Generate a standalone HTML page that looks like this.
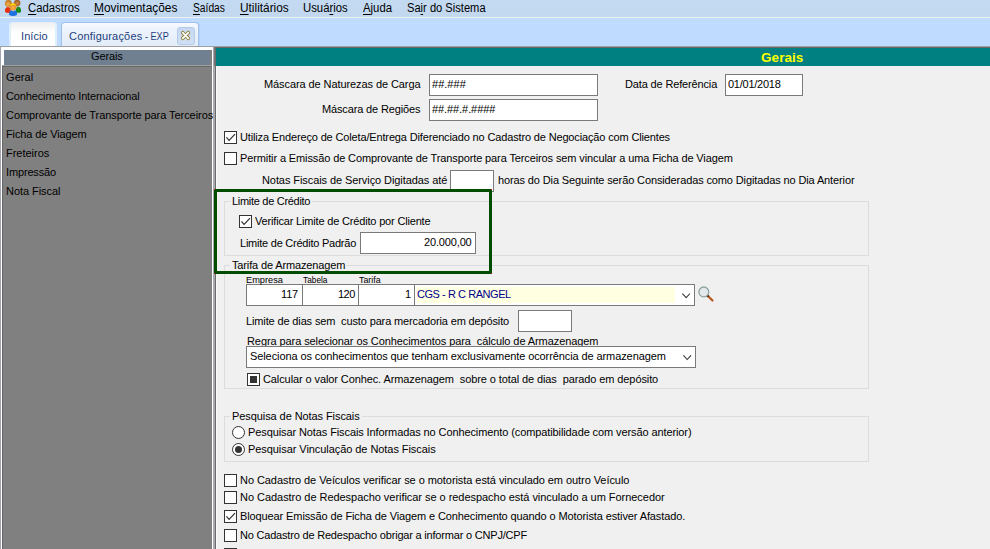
<!DOCTYPE html>
<html lang="pt-BR">
<head>
<meta charset="utf-8">
<title>Configurações - EXP</title>
<style>
html,body{margin:0;padding:0;}
body{width:990px;height:549px;overflow:hidden;position:relative;background:#f0f0f0;font-family:"Liberation Sans",Arial,sans-serif;font-size:11px;color:#000;}
.abs{position:absolute;}
.t{position:absolute;white-space:nowrap;line-height:13px;height:13px;font-size:11px;}
.mi{font-size:12px;line-height:15px;height:15px;}
.mi u{text-decoration:underline;text-underline-offset:1.5px;}
.tb{font-size:11px;color:#1e3f7d;}
.hd{font-weight:bold;font-size:13.5px;color:#ffff00;line-height:15px;height:15px;}
.sm{font-size:9.5px;line-height:11px;height:11px;}
.gl{background:#f0f0f0;box-shadow:-2px 0 0 #f0f0f0,2px 0 0 #f0f0f0;}
.tab{position:absolute;box-sizing:border-box;border:1px solid #dbeaff;border-bottom:none;border-radius:4px 4px 0 0;}
.inp{position:absolute;box-sizing:border-box;border:1px solid #7a7a7a;background:#fff;}
.cb{position:absolute;box-sizing:border-box;width:13px;height:13px;border:1px solid #333;background:#fff;}
.rd{position:absolute;box-sizing:border-box;width:13px;height:13px;border:1px solid #333;border-radius:50%;background:#fff;}
.gb{position:absolute;box-sizing:border-box;border:1px solid #dcdcdc;}
</style>
</head>
<body>
<!-- menu bar -->
<div class="abs" style="left:0;top:0;width:990px;height:17px;background:linear-gradient(#c4daf2,#c1d8ef);"></div>
<div class="abs" style="left:0;top:17px;width:990px;height:1px;background:#eef0f2;"></div>
<div class="abs" style="left:0;top:18px;width:990px;height:28px;background:#bfdbff;"></div>
<svg class="abs" style="left:0;top:0" width="24" height="17" viewBox="0 0 24 17">
 <defs>
  <radialGradient id="h1" cx="0.45" cy="0.6" r="0.6"><stop offset="0" stop-color="#f8b552"/><stop offset="1" stop-color="#b66f1a"/></radialGradient>
  <radialGradient id="h2" cx="0.5" cy="0.55" r="0.6"><stop offset="0" stop-color="#d08a48"/><stop offset="1" stop-color="#8f5520"/></radialGradient>
  <radialGradient id="h3" cx="0.5" cy="0.6" r="0.6"><stop offset="0" stop-color="#ffb44e"/><stop offset="1" stop-color="#d98220"/></radialGradient>
 </defs>
 <circle cx="8.4" cy="3.4" r="3.4" fill="url(#h1)"/>
 <circle cx="17.1" cy="3.1" r="3.3" fill="url(#h2)"/>
 <path d="M5 12 Q4.6 7.2 7.6 6.9 Q10.6 7 10.6 10 L10.4 12.6 Q7.5 13.4 5 12Z" fill="#e8300f"/>
 <path d="M16 12.6 L15.9 9 Q16.5 6.8 18.6 6.8 Q21.3 7.2 21 12 Q18.6 13.3 16 12.6Z" fill="#158a15"/>
 <circle cx="13.1" cy="7" r="3.4" fill="url(#h3)"/>
 <path d="M9.9 6 Q10.4 3.2 13.2 3.2 Q15.8 3.3 16.2 5.6 Q13.4 4.4 9.9 6Z" fill="#ffd800"/>
 <path d="M9.1 15 Q8.9 10.6 11.2 10.2 L13.1 11.4 L15 10.2 Q17.2 10.6 17 15 Q13 16.8 9.1 15Z" fill="#1e6fe0"/>
</svg>

<!-- tabs -->
<div class="tab" style="left:9px;top:22px;width:48px;height:24px;background:linear-gradient(#efefef,#fbfbfb 30%,#ffffff 50%);border-color:#e4edf9;box-shadow:inset 1px 0 0 #d8f3fd,inset -1px 0 0 #d8f3fd;"></div>
<div class="tab" style="left:61px;top:22px;width:138px;height:24px;background:linear-gradient(#f7faff,#eef4fc 25%,#e3ecf9);border-color:#9fc0ec;box-shadow:1px 0 1px #b4d0f8;">
 <div class="abs" style="left:115px;top:4px;width:18px;height:18px;box-sizing:border-box;border:1px solid #b4cbec;border-radius:3px;background:linear-gradient(#c6d8f0,#d0dff3)"></div>
 <svg class="abs" style="left:115px;top:4px" width="18" height="18" viewBox="0 0 18 18"><path d="M5.7 5.7 L11.3 11.3 M11.3 5.7 L5.7 11.3" stroke="#8a7a32" stroke-width="3.5" stroke-linecap="round" fill="none"/><path d="M5.7 5.7 L11.3 11.3 M11.3 5.7 L5.7 11.3" stroke="#ffffff" stroke-width="1.9" stroke-linecap="round" fill="none"/></svg>
</div>

<!-- left panel -->
<div class="abs" style="left:0;top:46px;width:990px;height:1px;background:#a0a0a0;"></div>
<div class="abs" style="left:0;top:47px;width:212px;height:502px;background:#808080;"></div>
<div class="abs" style="left:0;top:47px;width:1px;height:502px;background:#a4a4ac;"></div>
<div class="abs" style="left:1px;top:47px;width:1px;height:502px;background:#fff;"></div>
<div class="abs" style="left:1px;top:47px;width:211px;height:3px;background:#fff;"></div>
<div class="abs" style="left:1px;top:47px;width:3px;height:18px;background:#fff;"></div>
<div class="abs" style="left:4px;top:50px;width:206px;height:15px;background:#708090;"></div>
<div class="abs" style="left:2px;top:65px;width:210px;height:1px;background:#a0a0a0;"></div>
<div class="abs" style="left:2px;top:66px;width:210px;height:1px;background:#686868;"></div>
<div class="abs" style="left:2px;top:66px;width:1px;height:483px;background:#686868;"></div>
<div class="abs" style="left:212px;top:47px;width:1px;height:502px;background:#fff;"></div>
<div class="abs" style="left:213px;top:47px;width:2px;height:502px;background:#a9a9b1;"></div>
<div class="abs" style="left:215px;top:47px;width:1px;height:502px;background:#6b6b6b;"></div>
<div class="abs" style="left:214px;top:47px;width:1px;height:19px;background:#77777b;"></div>
<div class="abs" style="left:216px;top:66px;width:1px;height:483px;background:#fbfbfb;"></div>

<!-- right panel -->
<div class="abs" style="left:216px;top:47px;width:774px;height:1px;background:#6a6a6a;"></div>
<div class="abs" style="left:216px;top:48px;width:774px;height:18px;background:#008080;"></div>

<div class="inp" style="left:429px;top:74px;width:169px;height:22px"></div>
<div class="inp" style="left:429px;top:99px;width:169px;height:22px"></div>
<div class="inp" style="left:725px;top:74px;width:78px;height:22px"></div>

<div class="cb" style="left:224px;top:131px"></div>
<svg class="abs" style="left:224px;top:131px" width="13" height="13"><path d="M2.4 6.4 L5.1 9.4 L11 3.1" fill="none" stroke="#333" stroke-width="1.2"/></svg>
<div class="cb" style="left:224px;top:152px"></div>
<div class="inp" style="left:450px;top:170px;width:44px;height:22px"></div>

<!-- Limite de Crédito -->
<div class="gb" style="left:224px;top:201px;width:645px;height:55px"></div>
<div class="cb" style="left:239px;top:215px"></div>
<svg class="abs" style="left:239px;top:215px" width="13" height="13"><path d="M2.4 6.4 L5.1 9.4 L11 3.1" fill="none" stroke="#333" stroke-width="1.2"/></svg>
<div class="inp" style="left:360px;top:232px;width:116px;height:22px"></div>

<!-- Tarifa de Armazenagem -->
<div class="gb" style="left:224px;top:265px;width:645px;height:124px"></div>
<div class="inp" style="left:246px;top:284px;width:57px;height:22px"></div>
<div class="inp" style="left:302px;top:284px;width:57px;height:22px"></div>
<div class="inp" style="left:358px;top:284px;width:57px;height:22px"></div>
<div class="inp" style="left:414px;top:284px;width:281px;height:22px;"><div class="abs" style="left:2px;top:2px;width:258px;height:16px;background:#ffffe1"></div>
 <svg class="abs" style="left:267px;top:8px" width="9" height="6"><path d="M0.4 0.5 L4.2 4.7 L8 0.5" fill="none" stroke="#3c3c3c" stroke-width="1.1"/></svg></div>
<svg class="abs" style="left:697px;top:285px" width="18" height="18" viewBox="0 0 18 18"><path d="M10.4 10.5 L15.5 15.5" stroke="#b5581c" stroke-width="2.2" stroke-linecap="round"/><path d="M10 10.1 L11.6 11.7" stroke="#5a3414" stroke-width="2.2"/><circle cx="6.8" cy="6.9" r="4.9" fill="#e4eaec" stroke="#8fa3a0" stroke-width="1.3"/></svg>
<div class="inp" style="left:518px;top:310px;width:54px;height:22px"></div>
<div class="inp" style="left:246px;top:346px;width:450px;height:22px">
 <svg class="abs" style="left:436px;top:8px" width="9" height="6"><path d="M0.4 0.3 L4.2 4.5 L8 0.3" fill="none" stroke="#3c3c3c" stroke-width="1.1"/></svg></div>
<div class="cb" style="left:247px;top:373px"></div>
<div class="abs" style="left:250px;top:376px;width:7px;height:7px;background:#333"></div>

<!-- Pesquisa de Notas Fiscais -->
<div class="gb" style="left:224px;top:416px;width:645px;height:46px"></div>
<div class="rd" style="left:232px;top:426px"></div>
<div class="rd" style="left:232px;top:443px"></div>
<div class="abs" style="left:235px;top:446px;width:7px;height:7px;border-radius:50%;background:#333"></div>

<div class="cb" style="left:224px;top:474px"></div>
<div class="cb" style="left:224px;top:491px"></div>
<div class="cb" style="left:224px;top:510px"></div>
<svg class="abs" style="left:224px;top:510px" width="13" height="13"><path d="M2.4 6.4 L5.1 9.4 L11 3.1" fill="none" stroke="#333" stroke-width="1.2"/></svg>
<div class="cb" style="left:224px;top:529px"></div>
<div class="cb" style="left:224px;top:548px"></div>

<div class="t mi" style="left:27.90px;top:1px;transform:scaleX(0.9444);transform-origin:0 0;"><u>C</u>adastros</div>
<div class="t mi" style="left:94.30px;top:1px;transform:scaleX(0.9929);transform-origin:0 0;"><u>M</u>ovimentações</div>
<div class="t mi" style="left:193.10px;top:1px;transform:scaleX(0.8541);transform-origin:0 0;"><u>S</u>aídas</div>
<div class="t mi" style="left:240.10px;top:1px;transform:scaleX(0.9878);transform-origin:0 0;"><u>U</u>tilitários</div>
<div class="t mi" style="left:303.25px;top:1px;transform:scaleX(0.9457);transform-origin:0 0;">Usuá<u>r</u>ios</div>
<div class="t mi" style="left:362.90px;top:1px;transform:scaleX(0.9452);transform-origin:0 0;"><u>A</u>juda</div>
<div class="t mi" style="left:407.47px;top:1px;transform:scaleX(0.9274);transform-origin:0 0;">Sa<u>i</u>r do Sistema</div>
<div class="t tb" style="left:21.00px;top:30px;letter-spacing:0.080px;">Início</div>
<div class="t tb" style="left:69.00px;top:30px;letter-spacing:0.192px;">Configurações</div>
<div class="t tb sx" style="left:144.67px;top:30px;transform:scaleX(0.8259);transform-origin:0 0;">- EXP</div>
<div class="t" style="left:91.00px;top:50px;letter-spacing:-0.120px;">Gerais</div>
<div class="t li" style="left:6.00px;top:71px;letter-spacing:0.075px;">Geral</div>
<div class="t li" style="left:6.00px;top:90px;letter-spacing:-0.136px;">Conhecimento Internacional</div>
<div class="t li" style="left:6.00px;top:109px;letter-spacing:-0.059px;width:207px;overflow:hidden;">Comprovante de Transporte para Terceiros</div>
<div class="t li" style="left:6.00px;top:128px;letter-spacing:-0.121px;">Ficha de Viagem</div>
<div class="t li" style="left:6.00px;top:147px;letter-spacing:-0.013px;">Freteiros</div>
<div class="t li" style="left:6.00px;top:166px;letter-spacing:-0.150px;">Impressão</div>
<div class="t li" style="left:6.00px;top:185px;letter-spacing:-0.060px;">Nota Fiscal</div>
<div class="t hd" style="left:761.00px;top:50px;letter-spacing:0.060px;">Gerais</div>
<div class="t" style="left:264.00px;top:78px;letter-spacing:-0.086px;">Máscara de Naturezas de Carga</div>
<div class="t" style="left:432.00px;top:78px;letter-spacing:0.020px;">##.###</div>
<div class="t" style="left:322.00px;top:103px;letter-spacing:-0.141px;">Máscara de Regiões</div>
<div class="t" style="left:432.00px;top:103px;letter-spacing:-0.082px;">##.##.#.####</div>
<div class="t" style="left:625.00px;top:78px;letter-spacing:-0.147px;">Data de Referência</div>
<div class="t" style="left:728.00px;top:78px;letter-spacing:-0.244px;">01/01/2018</div>
<div class="t" style="left:240.00px;top:131px;letter-spacing:-0.148px;">Utiliza Endereço de Coleta/Entrega Diferenciado no Cadastro de Negociação com Clientes</div>
<div class="t" style="left:240.00px;top:152px;letter-spacing:-0.116px;">Permitir a Emissão de Comprovante de Transporte para Terceiros sem vincular a uma Ficha de Viagem</div>
<div class="t" style="left:262.00px;top:174px;letter-spacing:-0.081px;">Notas Fiscais de Serviço Digitadas até</div>
<div class="t" style="left:498.00px;top:174px;letter-spacing:-0.121px;">horas do Dia Seguinte serão Consideradas como Digitadas no Dia Anterior</div>
<div class="t gl" style="left:232.00px;top:195px;letter-spacing:-0.294px;">Limite de Crédito</div>
<div class="t" style="left:255.00px;top:215px;letter-spacing:-0.174px;">Verificar Limite de Crédito por Cliente</div>
<div class="t" style="left:240.00px;top:237px;letter-spacing:-0.235px;">Limite de Crédito Padrão</div>
<div class="t" style="left:424.00px;top:236px;letter-spacing:-0.150px;">20.000,00</div>
<div class="t gl" style="left:232.00px;top:259px;letter-spacing:-0.140px;">Tarifa de Armazenagem</div>
<div class="t sm" style="left:246.03px;top:274px;transform:scaleX(0.9703);transform-origin:0 0;">Empresa</div>
<div class="t sm" style="left:303.00px;top:274px;transform:scaleX(0.8750);transform-origin:0 0;">Tabela</div>
<div class="t sm" style="left:359.20px;top:274px;transform:scaleX(0.9304);transform-origin:0 0;">Tarifa</div>
<div class="t" style="left:281.00px;top:288px;letter-spacing:-0.150px;">117</div>
<div class="t" style="left:338.00px;top:288px;letter-spacing:-0.500px;">120</div>
<div class="t" style="left:405.00px;top:288px;">1</div>
<div class="t" style="left:417.00px;top:288px;letter-spacing:-0.447px;color:#00008b">CGS - R C RANGEL</div>
<div class="t" style="left:246.00px;top:315px;letter-spacing:-0.135px;">Limite de dias sem&nbsp; custo para mercadoria em depósito</div>
<div class="t" style="left:247.00px;top:335px;letter-spacing:-0.085px;height:11px;overflow:hidden">Regra para selecionar os Conhecimentos para&nbsp; cálculo de Armazenagem</div>
<div class="t" style="left:250.00px;top:350px;letter-spacing:-0.094px;">Seleciona os conhecimentos que tenham exclusivamente ocorrência de armazenagem</div>
<div class="t" style="left:263.00px;top:373px;letter-spacing:-0.099px;">Calcular o valor Conhec. Armazenagem&nbsp; sobre o total de dias&nbsp; parado em depósito</div>
<div class="t gl" style="left:232.00px;top:410px;letter-spacing:-0.079px;">Pesquisa de Notas Fiscais</div>
<div class="t" style="left:248.00px;top:426px;letter-spacing:-0.102px;">Pesquisar Notas Fiscais Informadas no Conhecimento (compatibilidade com versão anterior)</div>
<div class="t" style="left:248.00px;top:443px;letter-spacing:-0.064px;">Pesquisar Vinculação de Notas Fiscais</div>
<div class="t" style="left:240.00px;top:474px;letter-spacing:-0.063px;">No Cadastro de Veículos verificar se o motorista está vinculado em outro Veículo</div>
<div class="t" style="left:240.00px;top:491px;letter-spacing:-0.041px;">No Cadastro de Redespacho verificar se o redespacho está vinculado a um Fornecedor</div>
<div class="t" style="left:240.00px;top:510px;letter-spacing:-0.110px;">Bloquear Emissão de Ficha de Viagem e Conhecimento quando o Motorista estiver Afastado.</div>
<div class="t" style="left:240.00px;top:529px;letter-spacing:-0.196px;">No Cadastro de Redespacho obrigar a informar o CNPJ/CPF</div>

<!-- green highlight rectangle -->
<div class="abs" style="left:214px;top:189px;width:278px;height:85px;box-sizing:border-box;border:3px solid #004d00;"></div>
<div class="abs" style="left:214px;top:189px;width:1px;height:1px;background:#e01010"></div>
<div class="abs" style="left:491px;top:189px;width:1px;height:1px;background:#e01010"></div>
<div class="abs" style="left:214px;top:273px;width:1px;height:1px;background:#e01010"></div>
<div class="abs" style="left:491px;top:273px;width:1px;height:1px;background:#e01010"></div>

</body>
</html>
